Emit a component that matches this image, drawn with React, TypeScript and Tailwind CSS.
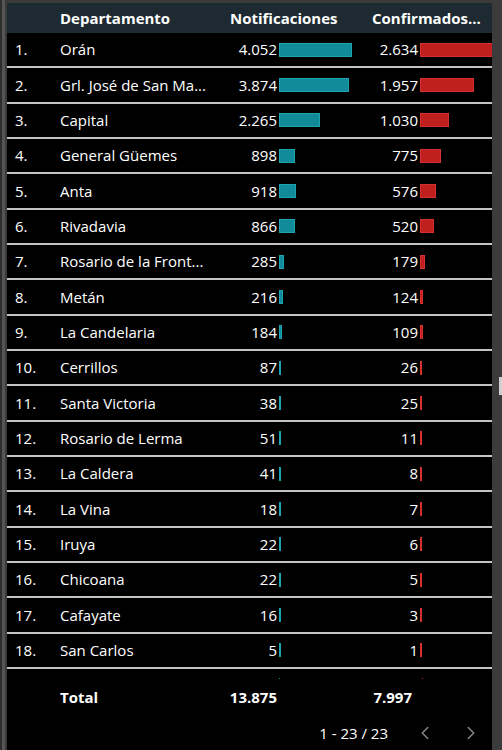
import { ChevronLeft, ChevronRight } from 'lucide-react';

type Row = { name: string; notif: number; conf: number };

const rows: Row[] = [
  { name: 'Orán', notif: 4052, conf: 2634 },
  { name: 'Grl. José de San Ma...', notif: 3874, conf: 1957 },
  { name: 'Capital', notif: 2265, conf: 1030 },
  { name: 'General Güemes', notif: 898, conf: 775 },
  { name: 'Anta', notif: 918, conf: 576 },
  { name: 'Rivadavia', notif: 866, conf: 520 },
  { name: 'Rosario de la Front...', notif: 285, conf: 179 },
  { name: 'Metán', notif: 216, conf: 124 },
  { name: 'La Candelaria', notif: 184, conf: 109 },
  { name: 'Cerrillos', notif: 87, conf: 26 },
  { name: 'Santa Victoria', notif: 38, conf: 25 },
  { name: 'Rosario de Lerma', notif: 51, conf: 11 },
  { name: 'La Caldera', notif: 41, conf: 8 },
  { name: 'La Vina', notif: 18, conf: 7 },
  { name: 'Iruya', notif: 22, conf: 6 },
  { name: 'Chicoana', notif: 22, conf: 5 },
  { name: 'Cafayate', notif: 16, conf: 3 },
  { name: 'San Carlos', notif: 5, conf: 1 },
];

const fmt = (n: number) => n.toLocaleString('de-DE');

const barW = (v: number, max: number) => Math.max(1, (v / max) * 73);

const App = () => {
  return (
    <div
      className="w-[502px] h-[750px] bg-[#3b3b3b] flex overflow-hidden text-white"
      style={{ fontFamily: '"Open Sans", "Noto Sans", sans-serif' }}
    >
      <div className="w-[7px] h-full flex">
        <div className="w-[2px] bg-[#2e2e2e]" />
        <div className="w-[3px] bg-[#555555]" />
        <div className="w-[2px] bg-[#3a3a3a]" />
      </div>

      <div className="w-[485px] h-full flex flex-col pt-[3px]">
        {/* header */}
        <div className="h-[30px] bg-[#1e2a31] flex items-center text-[15px] font-bold shrink-0">
          <div className="w-[53px]" />
          <div className="w-[157px]">Departamento</div>
          <div className="w-[140px] pl-[13px]">Notificaciones</div>
          <div className="flex-1 pl-[15px] whitespace-nowrap">Confirmados...</div>
        </div>

        <div className="bg-black flex-1 flex flex-col">
          {rows.map((r, i) => (
            <div
              key={r.name}
              className="h-[35.33px] border-b-2 border-[#c4c4c4] flex items-center text-[15px] shrink-0"
            >
              <div className="w-[53px] pl-[8px]">{i + 1}.</div>
              <div className="w-[157px] whitespace-nowrap overflow-hidden">{r.name}</div>
              <div className="w-[60px] text-right">{fmt(r.notif)}</div>
              <div className="w-[80px] pl-[2px] flex items-center">
                <div
                  className="h-[14px] bg-[#118b99] border border-[#1ba3b1]"
                  style={{ width: barW(r.notif, 4052) }}
                />
              </div>
              <div className="w-[61px] text-right">{fmt(r.conf)}</div>
              <div className="flex-1 pl-[2px] flex items-center overflow-hidden">
                <div
                  className="h-[14px] bg-[#bf1f1f] border border-[#d6302e] shrink-0"
                  style={{ width: barW(r.conf, 2634) }}
                />
              </div>
            </div>
          ))}

          {/* totals */}
          <div className="flex flex-col">
            <div className="h-[10px] flex items-end">
              <div className="w-[270px]" />
              <div className="w-[1px] h-[1px] bg-[#118b99] ml-[2px]" />
              <div className="w-[140px]" />
              <div className="w-[1px] h-[1px] bg-[#bf1f1f] ml-[2px]" />
            </div>
            <div className="h-[36px] flex items-center text-[15px] font-bold">
              <div className="w-[53px]" />
              <div className="w-[157px]">Total</div>
              <div className="w-[60px] text-right">13.875</div>
              <div className="w-[80px]" />
              <div className="w-[55px] text-right">7.997</div>
            </div>
            <div className="h-[36px] flex items-center justify-end pr-[10px] text-[15px]">
              <span className="mr-[26px]">1 - 23 / 23</span>
              <ChevronLeft size={22} strokeWidth={1.5} className="text-[#8a8a8a] mr-[24px]" />
              <ChevronRight size={22} strokeWidth={1.5} className="text-[#8a8a8a]" />
            </div>
          </div>
        </div>
      </div>

      <div className="flex-1 h-full flex flex-col items-end">
        <div className="h-[377px]" />
        <div className="w-[3px] h-[18px] bg-[#d0d0d0]" />
      </div>
    </div>
  );
};

export default App;
